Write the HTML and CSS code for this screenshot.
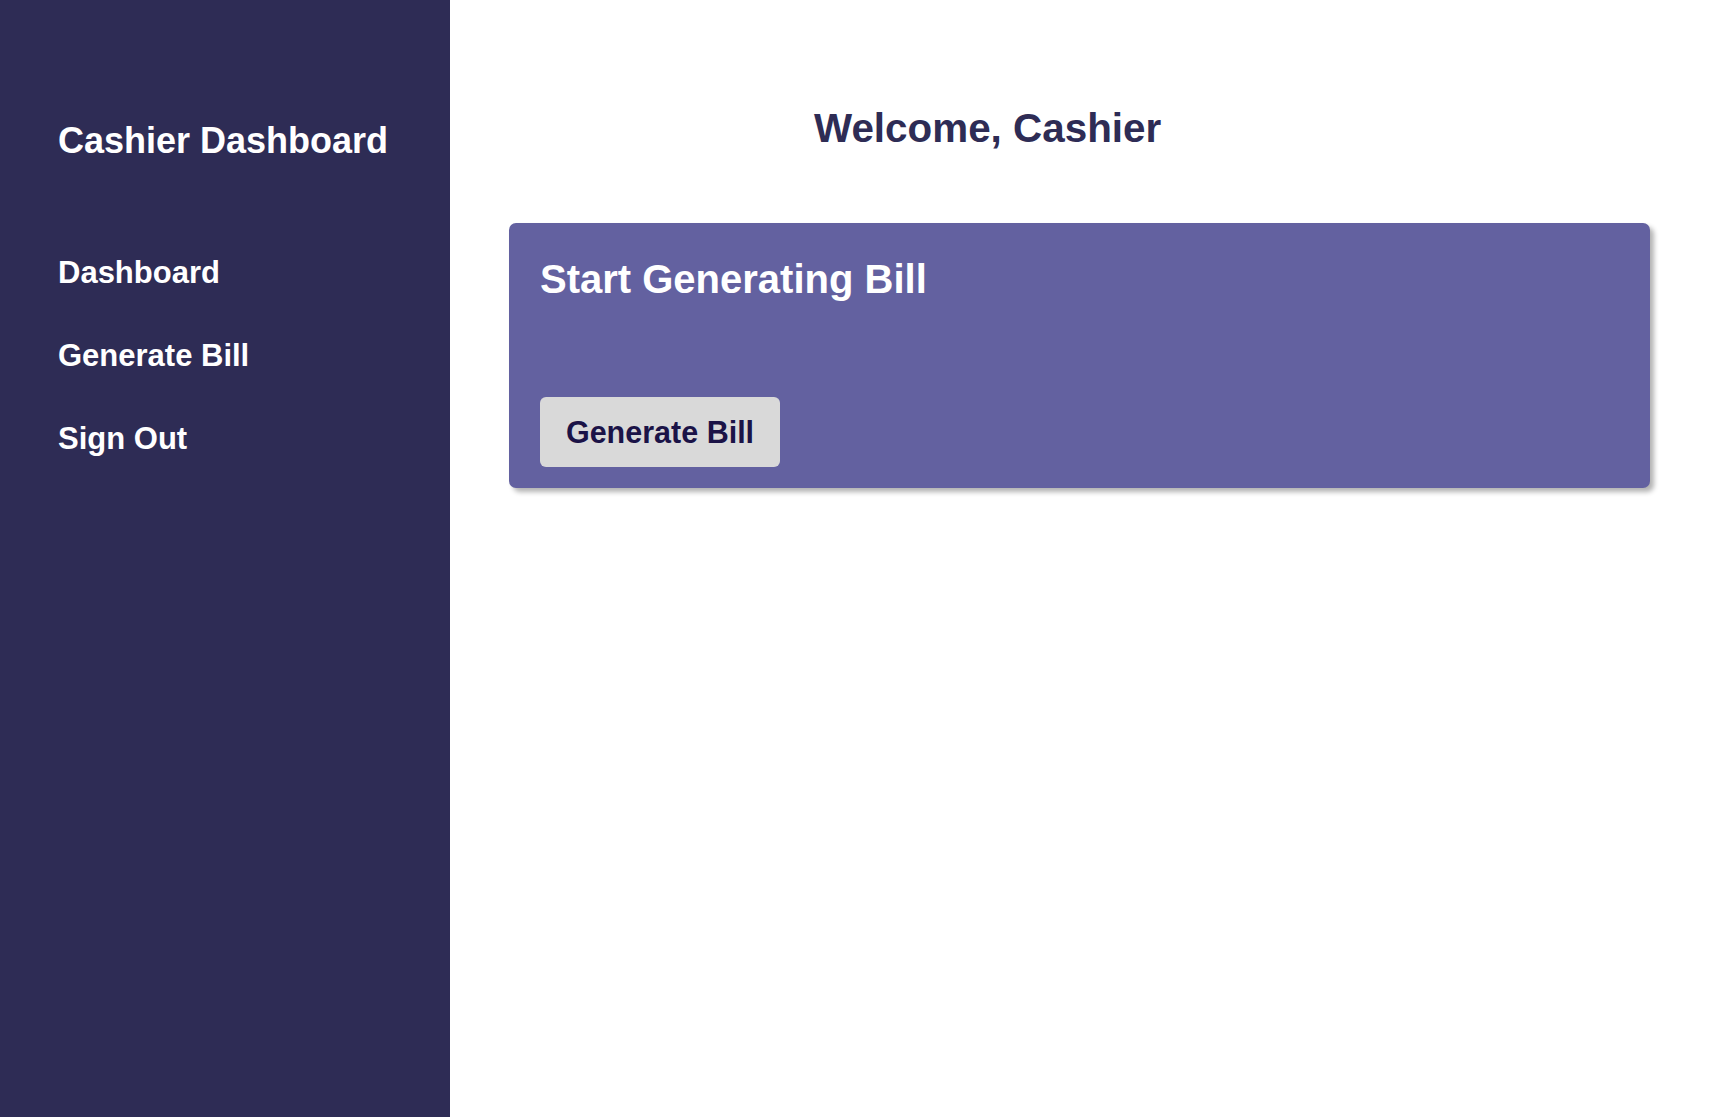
FILE: index.html
```html
<!DOCTYPE html>
<html lang="en">
<head>
<meta charset="utf-8">
<title>Cashier Dashboard</title>
<link rel="stylesheet" href="styles.css">
</head>
<body>
<div class="layout">
  <aside class="sidebar">
    <h1 class="brand">Cashier Dashboard</h1>
    <nav class="nav">
      <a class="nav-link" href="#">Dashboard</a>
      <a class="nav-link" href="#">Generate Bill</a>
      <a class="nav-link" href="#">Sign Out</a>
    </nav>
  </aside>
  <main class="main">
    <h2 class="welcome">Welcome, Cashier</h2>
    <section class="card">
      <h3 class="card-title">Start Generating Bill</h3>
      <button class="btn" type="button">Generate Bill</button>
    </section>
  </main>
</div>
</body>
</html>
```
FILE: styles.css
```css
html, body {
  margin: 0;
  padding: 0;
  height: 100%;
}
body {
  font-family: "Liberation Sans", Arial, sans-serif;
  font-weight: 700;
  background: #ffffff;
}
.layout {
  display: flex;
  min-height: 100vh;
}
.sidebar {
  width: 450px;
  flex: 0 0 450px;
  background: #2e2c55;
  box-sizing: border-box;
  padding: 123px 0 0 58px;
  color: #ffffff;
}
.brand {
  margin: 0;
  font-size: 36px;
  line-height: 1;
  font-weight: 700;
}
.nav {
  display: flex;
  flex-direction: column;
  gap: 52px;
  margin-top: 98px;
}
.nav-link {
  color: #ffffff;
  text-decoration: none;
  font-size: 31px;
  line-height: 1;
  font-weight: 700;
}
.main {
  flex: 1;
  box-sizing: border-box;
  padding: 108px 78px 0 59px;
}
.welcome {
  margin: 0 0 75px 305px;
  font-size: 40.4px;
  line-height: 1;
  color: #2e2c55;
  font-weight: 700;
}
.card {
  background: #6361a0;
  border-radius: 7px;
  box-shadow: 4px 4px 5px rgba(0, 0, 0, 0.3);
  padding: 36px 31px 21px;
  display: flex;
  flex-direction: column;
  align-items: flex-start;
}
.card-title {
  margin: 0 0 98px;
  font-size: 40px;
  line-height: 1;
  color: #ffffff;
  font-weight: 700;
}
.btn {
  width: 240px;
  height: 70px;
  border: none;
  border-radius: 6px;
  background: #d9d9d9;
  color: #1b1347;
  font-family: "Liberation Sans", Arial, sans-serif;
  font-weight: 700;
  font-size: 30.5px;
  display: flex;
  align-items: center;
  justify-content: center;
  padding: 0;
  cursor: pointer;
}
```
